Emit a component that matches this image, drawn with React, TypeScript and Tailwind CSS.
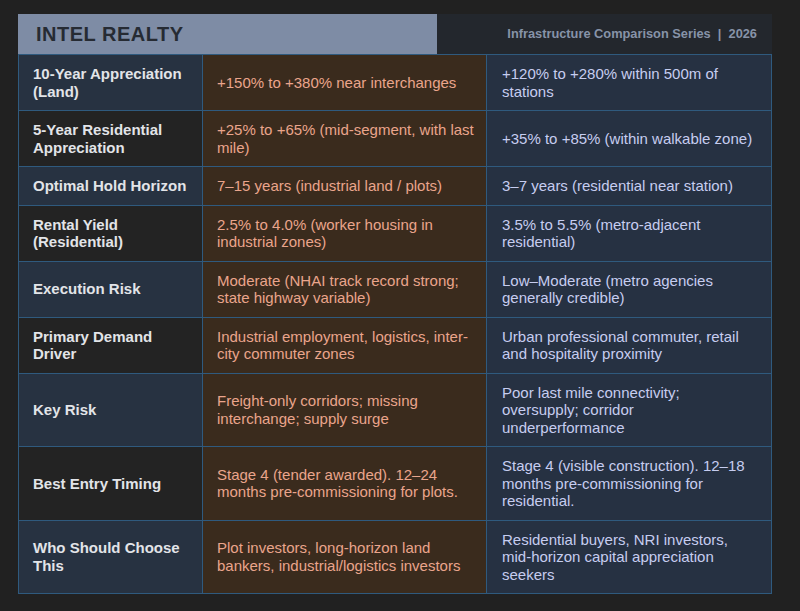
const rows: [string, string, string][] = [
  ['10-Year Appreciation (Land)', '+150% to +380% near interchanges', '+120% to +280% within 500m of stations'],
  ['5-Year Residential Appreciation', '+25% to +65% (mid-segment, with last mile)', '+35% to +85% (within walkable zone)'],
  ['Optimal Hold Horizon', '7–15 years (industrial land / plots)', '3–7 years (residential near station)'],
  ['Rental Yield (Residential)', '2.5% to 4.0% (worker housing in industrial zones)', '3.5% to 5.5% (metro-adjacent residential)'],
  ['Execution Risk', 'Moderate (NHAI track record strong; state highway variable)', 'Low–Moderate (metro agencies generally credible)'],
  ['Primary Demand Driver', 'Industrial employment, logistics, inter-city commuter zones', 'Urban professional commuter, retail and hospitality proximity'],
  ['Key Risk', 'Freight-only corridors; missing interchange; supply surge', 'Poor last mile connectivity; oversupply; corridor underperformance'],
  ['Best Entry Timing', 'Stage 4 (tender awarded). 12–24 months pre-commissioning for plots.', 'Stage 4 (visible construction). 12–18 months pre-commissioning for residential.'],
  ['Who Should Choose This', 'Plot investors, long-horizon land bankers, industrial/logistics investors', 'Residential buyers, NRI investors, mid-horizon capital appreciation seekers'],
];

export default function App() {
  return (
    <div
      className="min-h-[611px] w-full bg-[#212121] pt-[14px] pl-[18px]"
      style={{ fontFamily: '"Liberation Sans", Arial, sans-serif' }}
    >
      <div className="w-[754px]">
        <div className="flex h-[40px]">
          <div className="flex w-[419px] items-center bg-[#7e8ca5] pl-[18px]">
            <h1 className="text-[20px] font-bold tracking-[0.5px] text-[#262b33]">INTEL REALTY</h1>
          </div>
          <div className="flex flex-1 items-center justify-end bg-[#23272d] pr-[15px]">
            <span className="text-[12.8px] font-bold text-[#8793a8]">
              Infrastructure Comparison Series&nbsp; |&nbsp; 2026
            </span>
          </div>
        </div>

        <div className="border border-[#2f5a7e]">
          {rows.map(([label, road, metro], i) => (
            <div
              key={label}
              className={
                'grid grid-cols-[184px_284px_1fr] text-[15px] leading-[17.5px] ' +
                (i > 0 ? 'border-t border-[#2f5a7e]' : '')
              }
            >
              <div
                className={
                  'flex items-center border-r border-[#2f5a7e] py-[10px] pl-[14px] pr-2 font-bold text-[#e2e4e8] ' +
                  (i % 2 === 0 ? 'bg-[#273241]' : 'bg-[#232323]')
                }
              >
                {label}
              </div>
              <div className="flex items-center border-r border-[#2f5a7e] bg-[#3a2b1d] py-[10px] pl-[14px] pr-3 text-[#eaa58c]">
                {road}
              </div>
              <div className="flex items-center bg-[#263142] py-[10px] pl-[15px] pr-3 text-[#c6cdf0]">
                {metro}
              </div>
            </div>
          ))}
        </div>
      </div>
    </div>
  );
}
